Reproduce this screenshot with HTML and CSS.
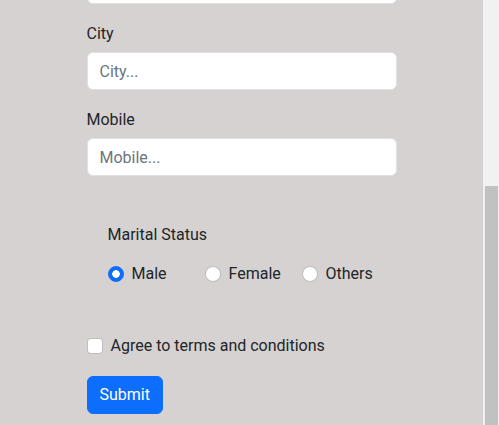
FILE: index.html
```html
<!DOCTYPE html>
<html lang="en">
<head>
<meta charset="utf-8">
<title>Registration Form</title>
<link rel="stylesheet" href="styles.css">
</head>
<body>
<div class="window">
  <div class="viewport">
    <form class="form">
      <div class="field">
        <input class="input" id="address" type="text" aria-label="Address">
      </div>
      <div class="field">
        <label class="field-label" for="city">City</label>
        <input class="input" id="city" type="text" placeholder="City...">
      </div>
      <div class="field">
        <label class="field-label" for="mobile">Mobile</label>
        <input class="input" id="mobile" type="text" placeholder="Mobile...">
      </div>
      <div class="marital">
        <div class="marital-label">Marital Status</div>
        <div class="radio-row">
          <label class="check"><input class="check-input radio" type="radio" name="status" checked><span>Male</span></label>
          <label class="check"><input class="check-input radio" type="radio" name="status"><span>Female</span></label>
          <label class="check"><input class="check-input radio" type="radio" name="status"><span>Others</span></label>
        </div>
      </div>
      <label class="check terms"><input class="check-input box" type="checkbox"><span>Agree to terms and conditions</span></label>
      <button class="btn" type="submit">Submit</button>
    </form>
  </div>
  <div class="scrollbar" aria-hidden="true">
    <div class="thumb"></div>
  </div>
</div>
</body>
</html>
```
FILE: styles.css
```css
html, body {
  margin: 0;
  height: 100%;
}

body {
  background: #d6d2d1;
  font-family: "Segoe UI", Roboto, "Noto Sans", sans-serif;
  font-size: 16px;
  line-height: 24px;
  color: #212529;
  overflow: hidden;
}

.window {
  display: flex;
  height: 100vh;
}

.viewport {
  flex: 1;
  min-width: 0;
  overflow: hidden;
  display: flex;
  flex-direction: column-reverse;
}

.scrollbar {
  width: 16px;
  flex-shrink: 0;
  background: #f1f1f1;
  display: flex;
  flex-direction: column;
  justify-content: flex-end;
}

.thumb {
  height: 239px;
  margin: 0 1px 0 2px;
  background: #c1c1c1;
}

.form {
  flex-shrink: 0;
  width: 310px;
  margin: 0 auto;
  padding-bottom: 11px;
}

.field {
  display: flex;
  flex-direction: column;
  margin-bottom: 16px;
}

.field-label {
  padding-top: 2px;
  margin-bottom: 6px;
}

.input {
  box-sizing: border-box;
  width: 100%;
  height: 38px;
  padding: 6px 12px;
  border: 1px solid #dee2e6;
  border-radius: 6px;
  background: #fff;
  font: inherit;
  color: #212529;
  outline: none;
}

.input::placeholder {
  color: #6c757d;
}

.marital {
  padding: 29px 0 0 21px;
  margin-bottom: 48px;
}

.marital-label {
  padding-top: 2px;
  margin-bottom: 15px;
}

.radio-row {
  display: grid;
  grid-template-columns: 97px 97px auto;
}

.check {
  display: flex;
  align-items: flex-start;
}

.check-input {
  appearance: none;
  -webkit-appearance: none;
  box-sizing: border-box;
  flex-shrink: 0;
  width: 16px;
  height: 16px;
  margin: 4px 8px 0 0;
  border: 1px solid rgba(0, 0, 0, 0.25);
  background: #fff;
}

.radio {
  border-radius: 50%;
}

.radio:checked {
  background: radial-gradient(circle, #fff 0 3.5px, #0d6efd 4px);
  border-color: #0d6efd;
}

.box {
  border-radius: 4px;
}

.terms {
  margin-bottom: 18px;
}

.btn {
  display: block;
  height: 38px;
  padding: 6px 12px;
  border: 1px solid #0d6efd;
  border-radius: 6px;
  background: #0d6efd;
  color: #fff;
  font: inherit;
}
```
